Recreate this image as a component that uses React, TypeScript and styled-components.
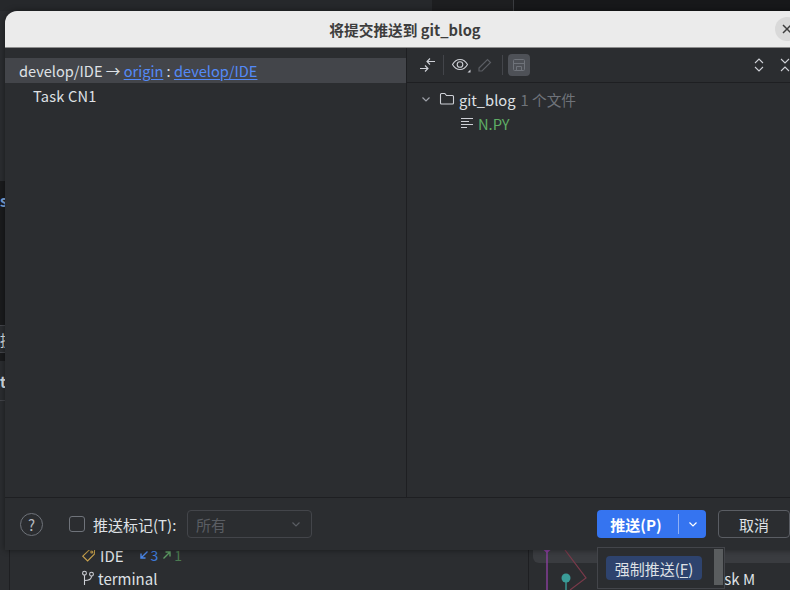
import React from 'react';
import styled, { createGlobalStyle } from 'styled-components';

const GlobalStyle = createGlobalStyle`
  html, body {
    margin: 0;
    padding: 0;
    width: 790px;
    height: 590px;
    overflow: hidden;
    background: #1e1f22;
    font-family: "Noto Sans CJK SC", "Noto Sans", sans-serif;
  }
  * { box-sizing: border-box; }
`;

const Desktop = styled.div`
  position: relative;
  width: 790px;
  height: 590px;
  overflow: hidden;
  background: #2b2d30;
`;

/* IDE window behind the dialog */
const Backdrop = styled.div`
  display: grid;
  grid-template-rows: 11px 539px 40px;
  height: 590px;
`;

const TopStrip = styled.div`
  display: grid;
  grid-template-columns: 432px 82px 1fr;
`;

const TopCell = styled.div<{ $bg: string; $line?: boolean }>`
  background: ${p => p.$bg};
  border-right: ${p => (p.$line ? '1px solid #3a3c40' : 'none')};
`;

const Sliver = styled.div`
  width: 5px;
  overflow: hidden;
  display: flex;
  flex-direction: column;
`;

const SliverBlock = styled.div<{ $h: number; $bg: string; $line?: boolean }>`
  flex: none;
  height: ${p => p.$h}px;
  background: ${p => p.$bg};
  border-bottom: ${p => (p.$line ? '1px solid #43454a' : 'none')};
  color: #dfe1e5;
  font-size: 15px;
  line-height: 20px;
  white-space: nowrap;
  overflow: hidden;
`;

const SliverText = styled.div<{ $top: number; $color?: string; $weight?: number }>`
  margin-top: ${p => p.$top}px;
  color: ${p => p.$color || '#dfe1e5'};
  font-weight: ${p => p.$weight || 400};
`;

const BottomStrip = styled.div`
  display: grid;
  grid-template-columns: 10px 519px 1fr;
  overflow: hidden;
`;

const BottomRail = styled.div`
  background: #2b2d30;
  border-right: 1px solid #1e1f22;
`;

const RefList = styled.div`
  background: #2b2d30;
  border-right: 1px solid #1e1f22;
  padding-left: 71px;
  display: flex;
  flex-direction: column;
  color: #dfe1e5;
  font-size: 15px;
`;

const RefRow = styled.div`
  height: 24px;
  display: flex;
  align-items: center;
  gap: 3px;
  white-space: nowrap;
`;

const FirstRefRow = styled(RefRow)`
  margin-top: -7px;
  margin-bottom: -1px;
`;

const Counter = styled.span<{ $color: string; $gap: number }>`
  display: inline-flex;
  align-items: center;
  gap: 2px;
  color: ${p => p.$color};
  font-size: 14px;
  margin-left: ${p => p.$gap}px;
`;

const GraphPane = styled.div`
  position: relative;
  background: #2b2d30;
  color: #dfe1e5;
  font-size: 15px;
`;

const GraphBar = styled.div`
  height: 13px;
  margin-left: 4px;
  background: #3a3c40;
  border-bottom-left-radius: 6px;
`;

const GraphCommit = styled.div`
  position: absolute;
  left: 179px;
  top: 19px;
  white-space: nowrap;
  line-height: 20px;
`;

const GraphDrawing = styled.svg`
  position: absolute;
  left: 0;
  top: 0;
`;

/* dialog */
const Dialog = styled.div`
  position: absolute;
  left: 5px;
  top: 11px;
  width: 800px;
  height: 539px;
  display: flex;
  flex-direction: column;
  background: #2b2d30;
  border-radius: 12px 12px 0 0;
  overflow: hidden;
  color: #dfe1e5;
  box-shadow: 0 0 6px rgba(0, 0, 0, 0.45);
`;

const TitleBar = styled.div`
  flex: none;
  height: 37px;
  position: relative;
  display: flex;
  align-items: center;
  justify-content: center;
  background: #ebebeb;
  border-bottom: 1px solid #8d8d8d;
  color: #3d3d3d;
  font-size: 14.7px;
  font-weight: 700;
`;

const CloseButton = styled.div`
  position: absolute;
  right: 6px;
  top: 6px;
  width: 24px;
  height: 24px;
  border-radius: 50%;
  background: #d9d9d9;
  display: flex;
  align-items: center;
  justify-content: center;
`;

const Body = styled.div`
  flex: 1;
  min-height: 0;
  display: grid;
  grid-template-columns: 402px 1fr;
`;

const CommitPane = styled.div`
  padding-top: 10px;
  font-size: 14.6px;
  border-right: 1px solid #1e1f22;
`;

const BranchRow = styled.div`
  height: 25px;
  padding-left: 14px;
  display: flex;
  align-items: center;
  white-space: pre;
  background: #43454a;
`;

const BranchLink = styled.span`
  color: #548af7;
  text-decoration: underline;
  text-underline-offset: 2px;
`;

const CommitRow = styled.div`
  height: 25px;
  padding-left: 28px;
  display: flex;
  align-items: center;
  letter-spacing: 0.2px;
`;

const ChangesPane = styled.div`
  display: flex;
  flex-direction: column;
  min-width: 0;
`;

const Toolbar = styled.div`
  flex: none;
  height: 35px;
  padding: 0 0 0 11px;
  display: flex;
  align-items: center;
  border-bottom: 1px solid #1e1f22;
`;

const ToolIcon = styled.div<{ $w?: number }>`
  width: ${p => p.$w || 20}px;
  height: 22px;
  flex: none;
  display: flex;
  align-items: center;
  justify-content: center;
`;

const ToolSeparator = styled.div`
  width: 1px;
  height: 20px;
  margin: 0 5px;
  flex: none;
  background: #43454a;
`;

const ToolToggle = styled(ToolIcon)`
  width: 22px;
  background: #4e5157;
  border-radius: 4px;
`;

const ToolSpacer = styled.div`
  width: 219px;
  flex: none;
`;

const Tree = styled.div`
  padding-top: 4px;
  font-size: 14.7px;
`;

const TreeRow = styled.div<{ $indent: number }>`
  height: 24px;
  padding-left: ${p => p.$indent}px;
  display: flex;
  align-items: center;
  white-space: nowrap;
`;

const FolderName = styled.span`
  margin-left: 3px;
`;

const FileCount = styled.span`
  margin-left: 5px;
  color: #6f737a;
`;

const FileName = styled.span`
  margin-left: 4px;
  color: #5fad65;
`;

const Footer = styled.div`
  flex: none;
  height: 53px;
  padding: 0 0 0 15px;
  display: flex;
  align-items: center;
  border-top: 1px solid #1e1f22;
  font-size: 15px;
`;

const HelpButton = styled.div`
  width: 23px;
  height: 23px;
  border: 1px solid #6f737a;
  border-radius: 50%;
  color: #b4b8bf;
  font-size: 15px;
  display: flex;
  align-items: center;
  justify-content: center;
`;

const CheckBox = styled.div`
  width: 16px;
  height: 16px;
  margin-left: 26px;
  border: 1px solid #6f737a;
  border-radius: 3px;
`;

const CheckLabel = styled.span`
  width: 84px;
  margin-left: 8px;
  white-space: nowrap;
`;

const TagSelect = styled.div`
  width: 125px;
  height: 28px;
  margin-left: 10px;
  padding: 0 9px 0 8px;
  display: flex;
  align-items: center;
  justify-content: space-between;
  border: 1px solid #43454a;
  border-radius: 4px;
  color: #5a5d63;
`;

const PushButton = styled.div`
  width: 109px;
  height: 28px;
  margin-left: 285px;
  display: flex;
  align-items: center;
  background: #3574f0;
  border-radius: 4px;
  color: #fff;
  font-weight: 700;
`;

const PushLabel = styled.span`
  width: 81px;
  padding-right: 3px;
  text-align: center;
  white-space: nowrap;
`;

const PushDivider = styled.span`
  width: 1px;
  height: 20px;
  background: #8fb0f5;
`;

const PushArrow = styled.span`
  flex: 1;
  display: flex;
  justify-content: center;
`;

const CancelButton = styled.div`
  width: 72px;
  height: 28px;
  margin-left: 12px;
  display: flex;
  align-items: center;
  justify-content: center;
  border: 1px solid #5a5d63;
  border-radius: 4px;
`;

/* popup under the push button */
const PopupMenu = styled.div`
  position: absolute;
  left: 597px;
  top: 547px;
  width: 128px;
  height: 42px;
  padding: 8px 1px 0 8px;
  display: flex;
  justify-content: space-between;
  background: #2b2d30;
  border: 1px solid #43454a;
  color: #dfe1e5;
  font-size: 15px;
`;

const PopupItem = styled.div`
  width: 96px;
  height: 24px;
  display: flex;
  align-items: center;
  justify-content: center;
  background: #2e436e;
  border-radius: 4px;
  white-space: nowrap;
`;

const PopupScroll = styled.div`
  width: 9px;
  height: 36px;
  margin-top: -7px;
  background: #5a5d5f;
`;

const Mnemonic = styled.span`
  text-decoration: underline;
  text-underline-offset: 2px;
`;

const Chevron = ({ color = '#b4b8bf' }: { color?: string }) => (
  <svg width="12" height="12" viewBox="0 0 12 12" fill="none" stroke={color} strokeWidth="1.2">
    <path d="M2.5 4.5 6 8l3.5-3.5" />
  </svg>
);

export default function App() {
  return (
    <Desktop>
      <GlobalStyle />
      <Backdrop>
        <TopStrip>
          <TopCell $bg="#26282b" />
          <TopCell $bg="#1d1e20" $line />
          <TopCell $bg="#17181a" />
        </TopStrip>
        <Sliver>
          <SliverBlock $h={170} $bg="#2b2d30" />
          <SliverBlock $h={145} $bg="#1a1b1d" $line>
            <SliverText $top={10} $color="#7fa8dc" $weight={700}>s</SliverText>
          </SliverBlock>
          <SliverBlock $h={27} $bg="#2b2d30" $line>
            <SliverText $top={4}>提</SliverText>
          </SliverBlock>
          <SliverBlock $h={8} $bg="#1a1b1d" />
          <SliverBlock $h={40} $bg="#2b2d30" $line>
            <SliverText $top={11} $weight={700}>t</SliverText>
          </SliverBlock>
          <SliverBlock $h={149} $bg="#2b2d30" />
        </Sliver>
        <BottomStrip>
          <BottomRail />
          <RefList>
            <FirstRefRow>
              <svg width="16" height="16" viewBox="0 0 16 16" fill="none" stroke="#c9a24d" strokeWidth="1.1">
                <path d="M1.8 9.2 8.6 2.6l5-.4-.3 5-6.7 6.8z" />
                <circle cx="10.8" cy="5" r="1" />
              </svg>
              <span>IDE</span>
              <Counter $color="#3f7fe0" $gap={12}>
                <svg width="10" height="10" viewBox="0 0 10 10" fill="none" stroke="#4a86e8" strokeWidth="1.4">
                  <path d="M8.5 1.5 2 8M2 3.5V8h4.5" />
                </svg>
                3
              </Counter>
              <Counter $color="#4b7a50" $gap={1}>
                <svg width="10" height="10" viewBox="0 0 10 10" fill="none" stroke="#5d9b63" strokeWidth="1.4">
                  <path d="M1.5 8.5 8 2M3.5 2H8v4.5" />
                </svg>
                1
              </Counter>
            </FirstRefRow>
            <RefRow>
              <svg width="14" height="16" viewBox="0 0 14 16" fill="none" stroke="#ced0d6" strokeWidth="1.1">
                <circle cx="3.5" cy="3.2" r="1.9" />
                <circle cx="10.5" cy="4.2" r="1.9" />
                <path d="M3.5 5.2V15M3.5 10.5c4.5 0 7-1.5 7-4.3" />
              </svg>
              <span>terminal</span>
            </RefRow>
          </RefList>
          <GraphPane>
            <GraphBar />
            <GraphDrawing width="261" height="40" viewBox="0 0 261 40" fill="none">
              <path d="M18 0V40" stroke="#8a3f9e" strokeWidth="1.4" />
              <path d="M14.5 0h7L18 3z" fill="#8a3f9e" />
              <path d="M36 0 57 28 41 40" stroke="#7a3a4a" strokeWidth="1.2" />
              <path d="M37 28V40" stroke="#3a9c98" strokeWidth="1.4" />
              <circle cx="37" cy="28" r="4.5" fill="#3a9c98" />
            </GraphDrawing>
            <GraphCommit>Task M</GraphCommit>
          </GraphPane>
        </BottomStrip>
      </Backdrop>

      <Dialog>
        <TitleBar>
          将提交推送到 git_blog
          <CloseButton>
            <svg width="12" height="12" viewBox="0 0 12 12" stroke="#3d3d3d" strokeWidth="1.5">
              <path d="M2 2l8 8M10 2l-8 8" />
            </svg>
          </CloseButton>
        </TitleBar>
        <Body>
          <CommitPane>
            <BranchRow>
              develop/IDE → <BranchLink>origin</BranchLink> : <BranchLink>develop/IDE</BranchLink>
            </BranchRow>
            <CommitRow>Task CN1</CommitRow>
          </CommitPane>
          <ChangesPane>
            <Toolbar>
              <ToolIcon>
                <svg width="18" height="16" viewBox="0 0 18 16" fill="none" stroke="#ced0d6" strokeWidth="1.1">
                  <path d="M8 4.500h8M11 1.500l-3 3 3 3" />
                  <path d="M1 11.500h8M6 8.500l3 3-3 3" />
                </svg>
              </ToolIcon>
              <ToolSeparator />
              <ToolIcon $w={24}>
                <svg width="20" height="16" viewBox="0 0 20 16" fill="none" stroke="#ced0d6" strokeWidth="1.1">
                  <path d="M1.500 7.500C3.500 4 6.200 2.500 9 2.500s5.500 1.500 7.500 5c-2 3.500-4.700 5-7.500 5s-5.500-1.500-7.500-5z" />
                  <circle cx="9" cy="7.500" r="2.800" />
                  <path d="M19.500 12.500v3h-3z" fill="#ced0d6" stroke="none" />
                </svg>
              </ToolIcon>
              <ToolIcon $w={24}>
                <svg width="16" height="16" viewBox="0 0 16 16" fill="none" stroke="#5a5d63" strokeWidth="1.2">
                  <path d="M2 11 10.500 2.500l3 3L5 14H2z" />
                </svg>
              </ToolIcon>
              <ToolSeparator />
              <ToolToggle>
                <svg width="14" height="14" viewBox="0 0 14 14" fill="none" stroke="#6f737a" strokeWidth="1">
                  <rect x="1.500" y="1.500" width="11" height="11" rx="1" />
                  <path d="M1.500 5.500h11" />
                  <path d="M4.500 8.500h5v4h-5z" />
                </svg>
              </ToolToggle>
              <ToolSpacer />
              <ToolIcon>
                <svg width="12" height="16" viewBox="0 0 12 16" fill="none" stroke="#ced0d6" strokeWidth="1.1">
                  <path d="M2 6l4-4 4 4M2 10l4 4 4-4" />
                </svg>
              </ToolIcon>
              <ToolIcon $w={32}>
                <svg width="12" height="16" viewBox="0 0 12 16" fill="none" stroke="#ced0d6" strokeWidth="1.1">
                  <path d="M2 2l4 4 4-4M2 14l4-4 4 4" />
                </svg>
              </ToolIcon>
            </Toolbar>
            <Tree>
              <TreeRow $indent={13}>
                <Chevron color="#9da0a8" />
                <svg width="18" height="16" viewBox="0 0 18 16" fill="none" stroke="#ced0d6" strokeWidth="1.1" style={{ marginLeft: 6 }}>
                  <path d="M2.500 3.500a1 1 0 0 1 1-1h3.300l1.700 2h6a1 1 0 0 1 1 1v6.500a1 1 0 0 1-1 1h-11a1 1 0 0 1-1-1z" />
                </svg>
                <FolderName>git_blog</FolderName>
                <FileCount>1 个文件</FileCount>
              </TreeRow>
              <TreeRow $indent={53}>
                <svg width="14" height="14" viewBox="0 0 14 14" fill="none" stroke="#ced0d6" strokeWidth="1">
                  <path d="M1 2.500h12M1 5.500h8M1 8.500h12M1 11.500h6" />
                </svg>
                <FileName>N.PY</FileName>
              </TreeRow>
            </Tree>
          </ChangesPane>
        </Body>
        <Footer>
          <HelpButton>?</HelpButton>
          <CheckBox />
          <CheckLabel>推送标记(T):</CheckLabel>
          <TagSelect>
            所有
            <Chevron color="#5a5d63" />
          </TagSelect>
          <PushButton>
            <PushLabel>推送(P)</PushLabel>
            <PushDivider />
            <PushArrow>
              <Chevron color="#ffffff" />
            </PushArrow>
          </PushButton>
          <CancelButton>取消</CancelButton>
        </Footer>
      </Dialog>

      <PopupMenu>
        <PopupItem>
          强制推送(<Mnemonic>F</Mnemonic>)
        </PopupItem>
        <PopupScroll />
      </PopupMenu>
    </Desktop>
  );
}
